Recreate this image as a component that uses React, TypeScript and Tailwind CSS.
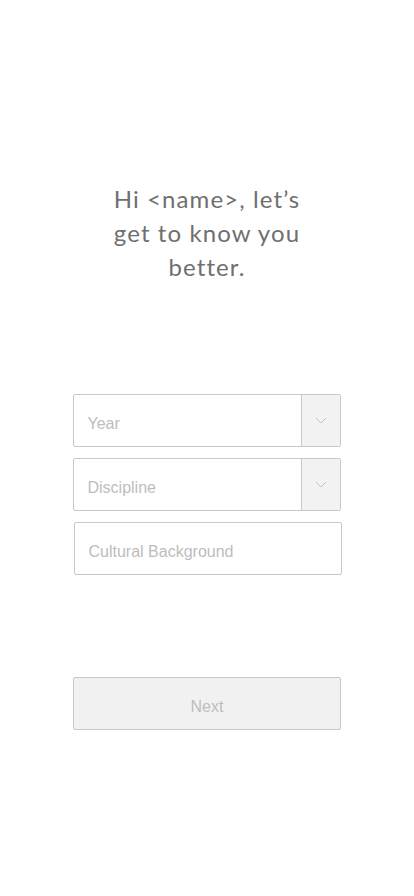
import React from "react";

function Chevron() {
  return (
    <svg width="12" height="7" viewBox="0 0 12 7" fill="none">
      <path d="M1 1l5 5 5-5" stroke="#c4c4c4" strokeWidth="1" />
    </svg>
  );
}

function SelectBox({ label }: { label: string }) {
  return (
    <div className="flex h-[53px] w-[268px] rounded-[2px] border border-[#c8c8c8] bg-white">
      <div className="flex flex-1 items-center pl-[14px] pt-[6px] text-[16px] text-[#bdbdbd]">{label}</div>
      <div className="flex w-[39px] items-center justify-center border-l border-[#c8c8c8] bg-[#f2f2f2]">
        <Chevron />
      </div>
    </div>
  );
}

export default function App() {
  return (
    <div
      className="flex min-h-[896px] w-[414px] flex-col items-center bg-white"
      style={{ fontFamily: '"Liberation Sans", Arial, sans-serif' }}
    >
      <h1
        className="mt-[182px] text-center text-[24px] leading-[34px] tracking-[1.1px] text-[#6f6f6f]"
        style={{ fontFamily: '"Lato", "Noto Sans", sans-serif' }}
      >
        Hi &lt;name&gt;, let’s
        <br />
        get to know you
        <br />
        better.
      </h1>
      <div className="mt-[110px] flex flex-col gap-[11px]">
        <SelectBox label="Year" />
        <SelectBox label="Discipline" />
        <div className="ml-[1px] flex h-[53px] w-[268px] items-center rounded-[2px] border border-[#c8c8c8] bg-white pl-[14px] pt-[6px] text-[16px] text-[#bdbdbd]">
          Cultural Background
        </div>
      </div>
      <button className="mt-[102px] flex h-[53px] w-[268px] items-center justify-center rounded-[2px] border border-[#c8c8c8] bg-[#f1f1f1] pt-[6px] text-[16px] text-[#bdbdbd]">
        Next
      </button>
    </div>
  );
}
